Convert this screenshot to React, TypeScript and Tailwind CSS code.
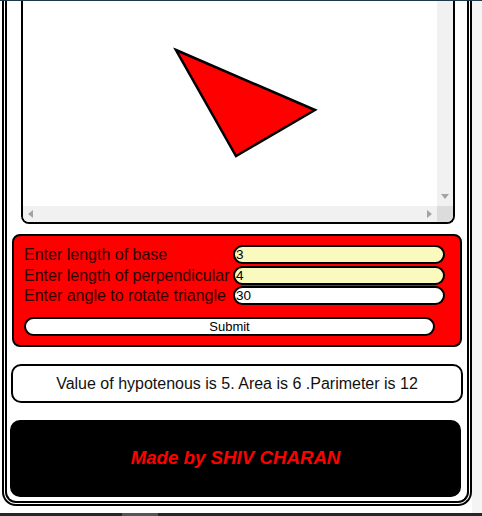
import { useState } from "react";

function CanvasBox() {
    return (
        <div className="ml-[14px] mr-[12px] h-[223px] border-x-2 border-b-2 border-black rounded-b-[8px] overflow-hidden bg-white flex flex-col">
            <div className="flex flex-1">
                <div className="relative flex-1">
                    <svg width="413" height="205" className="absolute left-0 top-0">
                        <polygon points="153,49 292,109 213,155" fill="#ff0000" stroke="#000" strokeWidth="2.5" strokeLinejoin="miter" />
                    </svg>
                </div>
                <div className="w-[16px] bg-[#f1f1f1] flex flex-col justify-end items-center pb-[7px]">
                    <svg width="8" height="5"><polygon points="0,0 8,0 4,5" fill="#a3a3a3" /></svg>
                </div>
            </div>
            <div className="h-[16px] flex">
                <div className="flex-1 bg-[#f1f1f1] flex items-center justify-between px-[5px]">
                    <svg width="5" height="8"><polygon points="5,0 5,8 0,4" fill="#a3a3a3" /></svg>
                    <svg width="5" height="8"><polygon points="0,0 0,8 5,4" fill="#a3a3a3" /></svg>
                </div>
                <div className="w-[16px] bg-[#dcdcdc]" />
            </div>
        </div>
    )
}

export default function App() {
    const [base, setBase] = useState<string>('3');
    const [perp, setPerp] = useState<string>('4');
    const [angle, setAngle] = useState<string>('30');

    const inputCls = "h-[19px] w-[212px] border-2 border-black rounded-full pl-[1px] text-[13.5px] leading-none text-black outline-none";

    return (
        <div className="w-[482px] h-[516px] overflow-hidden bg-white flex flex-col font-['Liberation_Sans',Arial,sans-serif]">
            <div className="h-px bg-[#1d3a48] shrink-0" />
            <div className="flex flex-1">
                <div className="w-[472px] pl-[2px]">
                    <div className="border-x-[5px] border-b-[5px] border-double border-black rounded-b-[14px] pb-[4px]">
                        <CanvasBox />

                        <form onSubmit={(e) => e.preventDefault()}
                            className="mx-[5px] mt-[10px] bg-[#ff0000] border-2 border-black rounded-[8px] pt-[9px] pb-[9px] pl-[10px] pr-[15px]">
                            <div className="grid grid-cols-[209px_212px] gap-y-[1.5px] text-[16px] leading-[19px] text-[#2e0000]">
                                <label htmlFor="base" className="whitespace-nowrap">Enter length of base</label>
                                <input id="base" value={base} onChange={(e) => setBase(e.target.value)} className={`${inputCls} bg-[#fafabe]`} />
                                <label htmlFor="perp" className="whitespace-nowrap">Enter length of perpendicular</label>
                                <input id="perp" value={perp} onChange={(e) => setPerp(e.target.value)} className={`${inputCls} bg-[#fafabe]`} />
                                <label htmlFor="angle" className="whitespace-nowrap">Enter angle to rotate triangle</label>
                                <input id="angle" value={angle} onChange={(e) => setAngle(e.target.value)} className={`${inputCls} bg-white`} />
                            </div>
                            <button type="submit"
                                className="block mt-[12px] w-[411px] h-[19px] bg-white border-2 border-black rounded-full text-[13px] leading-none text-black">
                                Submit
                            </button>
                        </form>

                        <div className="mx-[4px] mt-[17px] h-[39px] border-2 border-black rounded-[10px] flex items-center justify-center text-[16px] text-[#111]">
                            Value of hypotenous is 5. Area is 6 .Parimeter is 12
                        </div>

                        <div className="ml-[3px] mr-[6px] mt-[17px] h-[77px] bg-black rounded-[10px] flex items-center justify-center">
                            <span className="text-[18.7px] font-bold italic text-[#ff0000]">Made by SHIV CHARAN</span>
                        </div>
                    </div>
                </div>
                <div className="flex-1 bg-[#f4f4f4]" />
            </div>
            <div className="h-[3px] bg-[#262626] shrink-0 flex">
                <div className="ml-[122px] w-[36px] bg-[#555555]" />
            </div>
        </div>
    )
}
